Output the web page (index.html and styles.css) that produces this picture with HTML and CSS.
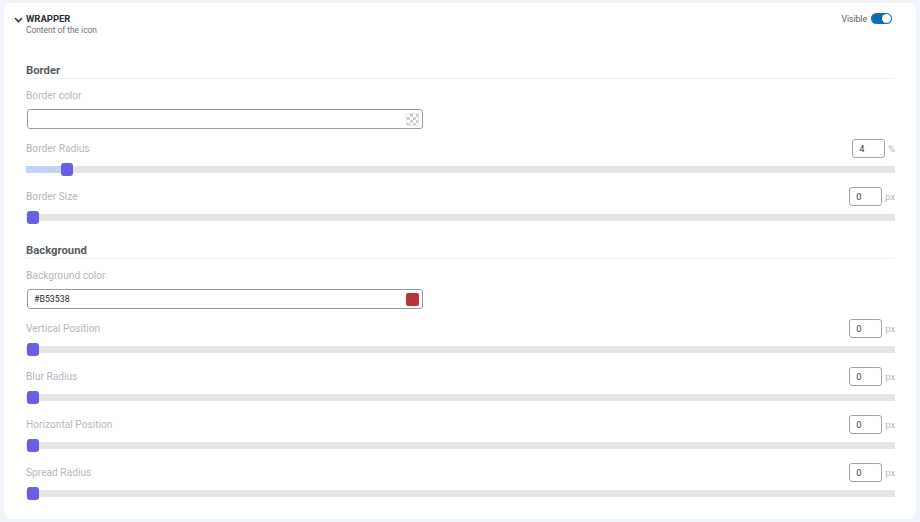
FILE: index.html
```html
<!DOCTYPE html>
<html>
<head>
<meta charset="utf-8">
<link rel="stylesheet" href="styles.css">
</head>
<body>
<div class="card">
  <div class="head">
    <div class="head-left">
      <svg class="chev" width="9" height="6" viewBox="0 0 9 6"><path d="M1 1 L4.5 4.5 L8 1" fill="none" stroke="#333" stroke-width="1.6"/></svg>
      <div>
        <div class="title">WRAPPER</div>
        <div class="subtitle">Content of the icon</div>
      </div>
    </div>
    <div class="visible">
      <span>Visible</span>
      <span class="toggle"><span class="knob"></span></span>
    </div>
  </div>

  <div class="section first">Border</div>
  <div class="field color-field">
    <div class="label-row"><span class="label">Border color</span></div>
    <div class="color-input"><span class="value"></span><span class="checker"></span></div>
  </div>
  <div class="field">
    <div class="label-row"><span class="label">Border Radius</span><span class="num-wrap"><span class="num">4</span><span class="unit">%</span></span></div>
    <div class="slider"><div class="track"><div class="fill" style="width:38px"></div></div><div class="thumb" style="left:35px"></div></div>
  </div>
  <div class="field">
    <div class="label-row"><span class="label">Border Size</span><span class="num-wrap"><span class="num">0</span><span class="unit">px</span></span></div>
    <div class="slider"><div class="track"></div><div class="thumb" style="left:1px"></div></div>
  </div>

  <div class="section">Background</div>
  <div class="field color-field">
    <div class="label-row"><span class="label">Background color</span></div>
    <div class="color-input"><span class="value">#B53538</span><span class="swatch"></span></div>
  </div>
  <div class="field">
    <div class="label-row"><span class="label">Vertical Position</span><span class="num-wrap"><span class="num">0</span><span class="unit">px</span></span></div>
    <div class="slider"><div class="track"></div><div class="thumb" style="left:1px"></div></div>
  </div>
  <div class="field">
    <div class="label-row"><span class="label">Blur Radius</span><span class="num-wrap"><span class="num">0</span><span class="unit">px</span></span></div>
    <div class="slider"><div class="track"></div><div class="thumb" style="left:1px"></div></div>
  </div>
  <div class="field">
    <div class="label-row"><span class="label">Horizontal Position</span><span class="num-wrap"><span class="num">0</span><span class="unit">px</span></span></div>
    <div class="slider"><div class="track"></div><div class="thumb" style="left:1px"></div></div>
  </div>
  <div class="field">
    <div class="label-row"><span class="label">Spread Radius</span><span class="num-wrap"><span class="num">0</span><span class="unit">px</span></span></div>
    <div class="slider"><div class="track"></div><div class="thumb" style="left:1px"></div></div>
  </div>
</div>
</body>
</html>
```

FILE: styles.css
```css
* { box-sizing: border-box; }
html, body { margin: 0; padding: 0; }
body {
  background: #f1f4fa;
  font-family: Roboto, "Liberation Sans", sans-serif;
  width: 920px;
  height: 522px;
  overflow: hidden;
  padding: 3px 4px;
}
.card {
  background: #fff;
  border-radius: 8px;
  height: 516px;
  padding: 10px 21px 0 22px;
}
.head {
  display: flex;
  justify-content: space-between;
  align-items: flex-start;
  margin-left: -12px;
  height: 51px;
}
.head-left { display: flex; align-items: flex-start; gap: 3px; }
.chev { margin-top: 4px; }
.title {
  font-size: 9.5px;
  font-weight: 700;
  color: #2b2f36;
  line-height: 12px;
}
.subtitle {
  font-size: 8.4px;
  color: #6f737b;
  line-height: 11px;
}
.visible {
  display: flex;
  align-items: center;
  gap: 4px;
  font-size: 8.6px;
  color: #555a62;
  margin-right: 3px;
}
.toggle {
  width: 21px;
  height: 11px;
  border-radius: 6px;
  background: #0f6db3;
  position: relative;
  display: inline-block;
}
.knob {
  position: absolute;
  right: 1px;
  top: 1px;
  width: 9px;
  height: 9px;
  border-radius: 50%;
  background: #fff;
}
.section {
  font-size: 11.3px;
  font-weight: 700;
  color: #575b63;
  line-height: 14px;
  border-bottom: 1px solid #eeeff2;
  margin-bottom: 7px;
  margin-top: 20px;
}
.section.first { margin-top: 0; }
.field { margin-bottom: 11px; }
.color-field { margin-bottom: 10px; }
.label-row {
  height: 19px;
  display: flex;
  align-items: center;
  justify-content: space-between;
}
.label {
  font-size: 10.2px;
  color: #b5b6be;
}
.num-wrap { display: flex; align-items: center; gap: 3px; }
.num {
  width: 33px;
  height: 19px;
  border: 1px solid #a4a4a8;
  border-radius: 3px;
  font-size: 9.3px;
  color: #3a3a3a;
  padding-left: 6px;
  line-height: 17px;
}
.unit {
  font-size: 9.3px;
  color: #b5b6be;
}
.color-input {
  margin-top: 4px;
  width: 396px;
  height: 20px;
  margin-left: 1px;
  border: 1px solid #9c9ca0;
  border-radius: 3px;
  display: flex;
  align-items: center;
  justify-content: space-between;
  padding: 0 3px 0 6px;
}
.value { font-size: 8.8px; color: #2a2a2a; }
.checker {
  width: 13px;
  height: 13px;
  border-radius: 2px;
  border: 1px solid #e0e0e0;
  background-color: #fff;
  background-image:
    linear-gradient(45deg, #cfcfcf 25%, transparent 25%, transparent 75%, #cfcfcf 75%),
    linear-gradient(45deg, #cfcfcf 25%, transparent 25%, transparent 75%, #cfcfcf 75%);
  background-size: 6px 6px;
  background-position: 0 0, 3px 3px;
}
.swatch {
  width: 13px;
  height: 13px;
  border-radius: 2px;
  background: #b53538;
}
.slider {
  position: relative;
  height: 13px;
  margin-top: 5px;
}
.track {
  position: absolute;
  left: 0;
  right: 0;
  top: 3px;
  height: 7px;
  background: #e5e5e7;
}
.fill {
  height: 100%;
  background: #c0d3f4;
}
.thumb {
  position: absolute;
  top: 0;
  width: 12px;
  height: 13px;
  border-radius: 3px;
  background: #6a5fe0;
}
```
